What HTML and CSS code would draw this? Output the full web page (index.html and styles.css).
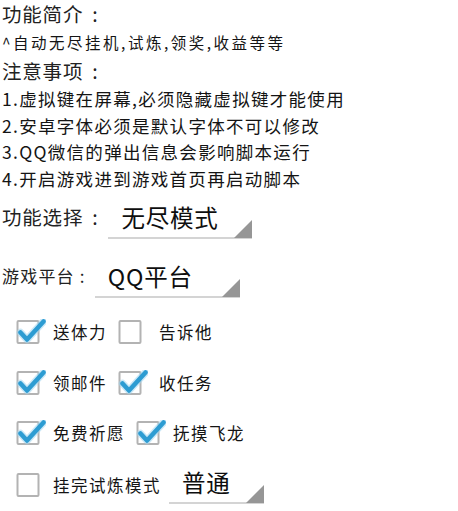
FILE: index.html
```html
<!DOCTYPE html>
<html lang="zh-CN">
<head>
<meta charset="utf-8">
<title>功能设置</title>
<link rel="stylesheet" href="styles.css">
</head>
<body>
<div class="page">
  <section class="intro">
    <div class="heading h-first">功能简介<span class="colon">:</span></div>
    <div class="summary">^自动无尽挂机,试炼,领奖,收益等等</div>
    <div class="heading h-second">注意事项<span class="colon">:</span></div>
    <ol class="notes">
      <li>1.虚拟键在屏幕,必须隐藏虚拟键才能使用</li>
      <li>2.安卓字体必须是默认字体不可以修改</li>
      <li>3.QQ微信的弹出信息会影响脚本运行</li>
      <li>4.开启游戏进到游戏首页再启动脚本</li>
    </ol>
  </section>

  <div class="select-row row-mode">
    <span class="select-label label-big">功能选择<span class="colon">:</span></span>
    <div class="spinner spin-mode">
      <span class="spin-text">无尽模式</span>
      <span class="spin-arrow"></span>
    </div>
  </div>

  <div class="select-row row-plat">
    <span class="select-label label-small">游戏平台<span class="colon colon-small">:</span></span>
    <div class="spinner spin-plat">
      <span class="spin-text">QQ平台</span>
      <span class="spin-arrow"></span>
    </div>
  </div>

  <div class="checks">
    <div class="check-row">
      <label class="check"><svg class="box" viewBox="0 0 30 26" width="30" height="26"><rect x="1.5" y="2" width="21" height="22" rx="1" class="frame"/><path class="glow" d="M4.5 13.5 L11 20.5 L27.5 2.5"/><path class="tick" d="M4.5 13.5 L11 20.5 L27.5 2.5"/></svg><span>送体力</span></label>
      <label class="check"><svg class="box" viewBox="0 0 30 26" width="30" height="26"><rect x="1.5" y="2" width="21" height="22" rx="1" class="frame"/></svg><span class="pad-label">告诉他</span></label>
    </div>
    <div class="check-row">
      <label class="check"><svg class="box" viewBox="0 0 30 26" width="30" height="26"><rect x="1.5" y="2" width="21" height="22" rx="1" class="frame"/><path class="glow" d="M4.5 13.5 L11 20.5 L27.5 2.5"/><path class="tick" d="M4.5 13.5 L11 20.5 L27.5 2.5"/></svg><span>领邮件</span></label>
      <label class="check"><svg class="box" viewBox="0 0 30 26" width="30" height="26"><rect x="1.5" y="2" width="21" height="22" rx="1" class="frame"/><path class="glow" d="M4.5 13.5 L11 20.5 L27.5 2.5"/><path class="tick" d="M4.5 13.5 L11 20.5 L27.5 2.5"/></svg><span class="pad-label">收任务</span></label>
    </div>
    <div class="check-row">
      <label class="check"><svg class="box" viewBox="0 0 30 26" width="30" height="26"><rect x="1.5" y="2" width="21" height="22" rx="1" class="frame"/><path class="glow" d="M4.5 13.5 L11 20.5 L27.5 2.5"/><path class="tick" d="M4.5 13.5 L11 20.5 L27.5 2.5"/></svg><span>免费祈愿</span></label>
      <label class="check"><svg class="box" viewBox="0 0 30 26" width="30" height="26"><rect x="1.5" y="2" width="21" height="22" rx="1" class="frame"/><path class="glow" d="M4.5 13.5 L11 20.5 L27.5 2.5"/><path class="tick" d="M4.5 13.5 L11 20.5 L27.5 2.5"/></svg><span>抚摸飞龙</span></label>
    </div>
    <div class="check-row last-row">
      <label class="check"><svg class="box" viewBox="0 0 30 26" width="30" height="26"><rect x="1.5" y="2" width="21" height="22" rx="1" class="frame"/></svg><span>挂完试炼模式</span></label>
      <div class="spinner spin-level">
        <span class="spin-text">普通</span>
        <span class="spin-arrow"></span>
      </div>
    </div>
  </div>
</div>
</body>
</html>
```

FILE: styles.css
```css
html, body {
  margin: 0;
  padding: 0;
  background: #ffffff;
}

body {
  font-family: "Noto Sans CJK SC", "Noto Sans", sans-serif;
  color: #141414;
  width: 458px;
  height: 511px;
  overflow: hidden;
}

.page {
  padding-left: 2px;
}

.intro {
  display: flex;
  flex-direction: column;
}

.heading {
  font-size: 19.5px;
  letter-spacing: 0.8px;
  color: #222222;
}

.h-first {
  line-height: 28px;
}

.h-second {
  line-height: 30px;
}

.colon {
  margin-left: 9px;
}

.colon-small {
  margin-left: 5px;
}

.summary {
  font-size: 15.5px;
  line-height: 28px;
  letter-spacing: 2.5px;
}

.notes {
  list-style: none;
  margin: 0;
  padding: 0;
  font-size: 17.5px;
  line-height: 26.5px;
  letter-spacing: 1.3px;
}

.select-row {
  display: flex;
  align-items: flex-start;
}

.row-mode {
  margin-top: 9px;
}

.row-plat {
  margin-top: 21px;
}

.select-label {
  line-height: 32px;
  white-space: nowrap;
}

.label-big {
  font-size: 19.5px;
  letter-spacing: 0.8px;
  color: #222222;
}

.label-small {
  font-size: 17px;
  letter-spacing: 1.2px;
  color: #222222;
}

.row-mode .select-label {
  margin-right: 10px;
}

.row-plat .select-label {
  margin-right: 9px;
}

.spinner {
  display: flex;
  align-items: flex-start;
  padding-bottom: 4px;
  border-bottom: 2px solid #d4d4d4;
}

.spin-text {
  font-size: 23.5px;
  line-height: 32px;
  letter-spacing: 0.8px;
  color: #0e0e0e;
  padding-left: 13px;
  white-space: nowrap;
}

.spin-arrow {
  margin-left: auto;
  align-self: flex-end;
  width: 0;
  height: 0;
  border-left: 18px solid transparent;
  border-bottom: 18px solid #969696;
  margin-bottom: -5px;
}

.spin-mode {
  width: 144px;
}

.spin-plat {
  width: 145px;
}

.spin-level {
  width: 95px;
  margin-left: -3px;
}

.checks {
  display: flex;
  flex-direction: column;
  padding-left: 14px;
  margin-top: 19px;
  gap: 20.5px;
}

.check-row {
  display: flex;
  align-items: center;
  height: 30px;
  gap: 11px;
}

.last-row {
  height: 38px;
  margin-top: -3px;
}

.check {
  display: flex;
  align-items: center;
  gap: 7px;
  font-size: 16.5px;
  letter-spacing: 1.5px;
  color: #141414;
  white-space: nowrap;
}

.pad-label {
  margin-left: 4px;
}

.box {
  display: block;
  flex: none;
}

.frame {
  fill: #ffffff;
  stroke: #b3b3b3;
  stroke-width: 2;
}

.glow {
  fill: none;
  stroke: #9fd6f0;
  stroke-width: 7.5;
  stroke-linecap: round;
  stroke-linejoin: round;
  opacity: 0.55;
}

.tick {
  fill: none;
  stroke: #2d9cd2;
  stroke-width: 4.5;
  stroke-linecap: round;
  stroke-linejoin: round;
}
```
